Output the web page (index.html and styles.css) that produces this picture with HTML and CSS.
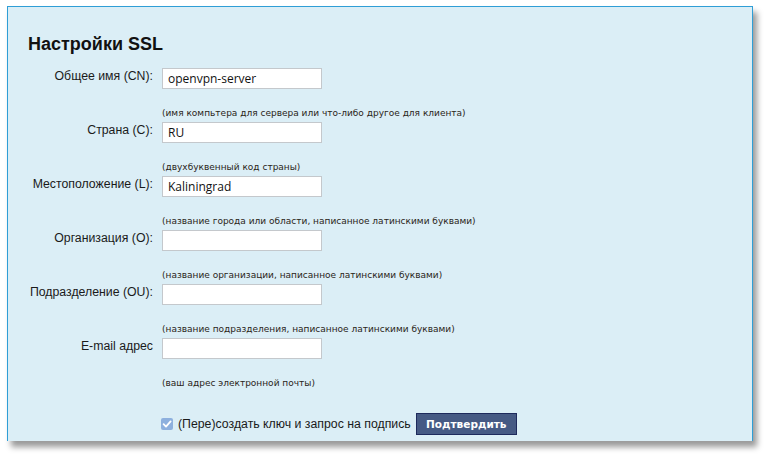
FILE: index.html
```html
<!DOCTYPE html>
<html lang="ru">
<head>
<meta charset="utf-8">
<link rel="stylesheet" href="styles.css">
</head>
<body>
<div class="panel">
  <h1 class="title">Настройки SSL</h1>
  <div class="form">
    <div class="field">
      <label class="label">Общее имя (CN):</label>
      <div class="control">
        <div class="input">openvpn-server</div>
        <div class="hint">(имя компьтера для сервера или что-либо другое для клиента)</div>
      </div>
    </div>
    <div class="field">
      <label class="label">Страна (C):</label>
      <div class="control">
        <div class="input">RU</div>
        <div class="hint">(двухбуквенный код страны)</div>
      </div>
    </div>
    <div class="field">
      <label class="label">Местоположение (L):</label>
      <div class="control">
        <div class="input">Kaliningrad</div>
        <div class="hint">(название города или области, написанное латинскими буквами)</div>
      </div>
    </div>
    <div class="field">
      <label class="label">Организация (O):</label>
      <div class="control">
        <div class="input"></div>
        <div class="hint">(название организации, написанное латинскими буквами)</div>
      </div>
    </div>
    <div class="field">
      <label class="label">Подразделение (OU):</label>
      <div class="control">
        <div class="input"></div>
        <div class="hint">(название подразделения, написанное латинскими буквами)</div>
      </div>
    </div>
    <div class="field">
      <label class="label">E-mail адрес</label>
      <div class="control">
        <div class="input"></div>
        <div class="hint">(ваш адрес электронной почты)</div>
      </div>
    </div>
    <div class="actions">
      <span class="check"><svg width="12" height="12" viewBox="0 0 12 12"><path d="M2.6 6.2 L5 8.6 L9.6 3.4" fill="none" stroke="#fff" stroke-width="1.8" stroke-linecap="round" stroke-linejoin="round"/></svg></span>
      <span class="check-label">(Пере)создать ключ и запрос на подпись</span>
      <button class="btn">Подтвердить</button>
    </div>
  </div>
</div>
</body>
</html>
```
FILE: styles.css
```css
html, body {
  margin: 0;
  padding: 0;
  background: #ffffff;
}
body {
  font-family: "Liberation Sans", Arial, sans-serif;
  color: #1a1a1a;
  padding: 6px 0 0 7px;
  height: 455px;
  box-sizing: border-box;
}
.panel {
  width: 744px;
  height: 434px;
  background: #dbeef6;
  border: 1px solid #2f9ed6;
  border-bottom: none;
  box-shadow: 4px 6px 6px rgba(0, 0, 0, 0.4);
  box-sizing: content-box;
}
.title {
  margin: 0;
  padding: 26px 0 0 20px;
  font-size: 18px;
  font-weight: bold;
  line-height: 22px;
  color: #111;
}
.form {
  margin-top: 13px;
  display: flex;
  flex-direction: column;
}
.field {
  display: grid;
  grid-template-columns: 145px 1fr;
  column-gap: 9px;
}
.label {
  text-align: right;
  font-size: 12.3px;
  line-height: 16px;
  color: #1a1a1a;
}
.control {
  display: flex;
  flex-direction: column;
}
.input {
  height: 19px;
  background: #fff;
  border: 1px solid #c4c8cc;
  font-family: "Open Sans", "DejaVu Sans", sans-serif;
  font-size: 12px;
  line-height: 19px;
  padding: 0 0 0 5px;
  box-sizing: content-box;
  width: 153px;
  color: #111;
}
.hint {
  margin: 18px 0 3px 0;
  font-family: "DejaVu Sans", sans-serif;
  font-size: 9px;
  line-height: 12px;
  color: #2a2418;
  white-space: nowrap;
}
.actions {
  display: flex;
  align-items: center;
  margin: 21px 0 0 153px;
}
.check {
  width: 12px;
  height: 12px;
  border-radius: 2px;
  background: #8db0de;
  display: inline-flex;
  align-items: center;
  justify-content: center;
  margin-right: 5px;
}
.check svg {
  display: block;
}
.check-label {
  font-size: 12.3px;
  line-height: 16px;
  color: #1a1a1a;
}
.btn {
  margin-left: 5px;
  width: 101px;
  height: 22px;
  background: #465a84;
  border: 1px solid #1d2a5c;
  color: #fff;
  font-family: "DejaVu Sans", sans-serif;
  font-weight: bold;
  font-size: 10.5px;
  padding: 0;
  line-height: 20px;
}
```
